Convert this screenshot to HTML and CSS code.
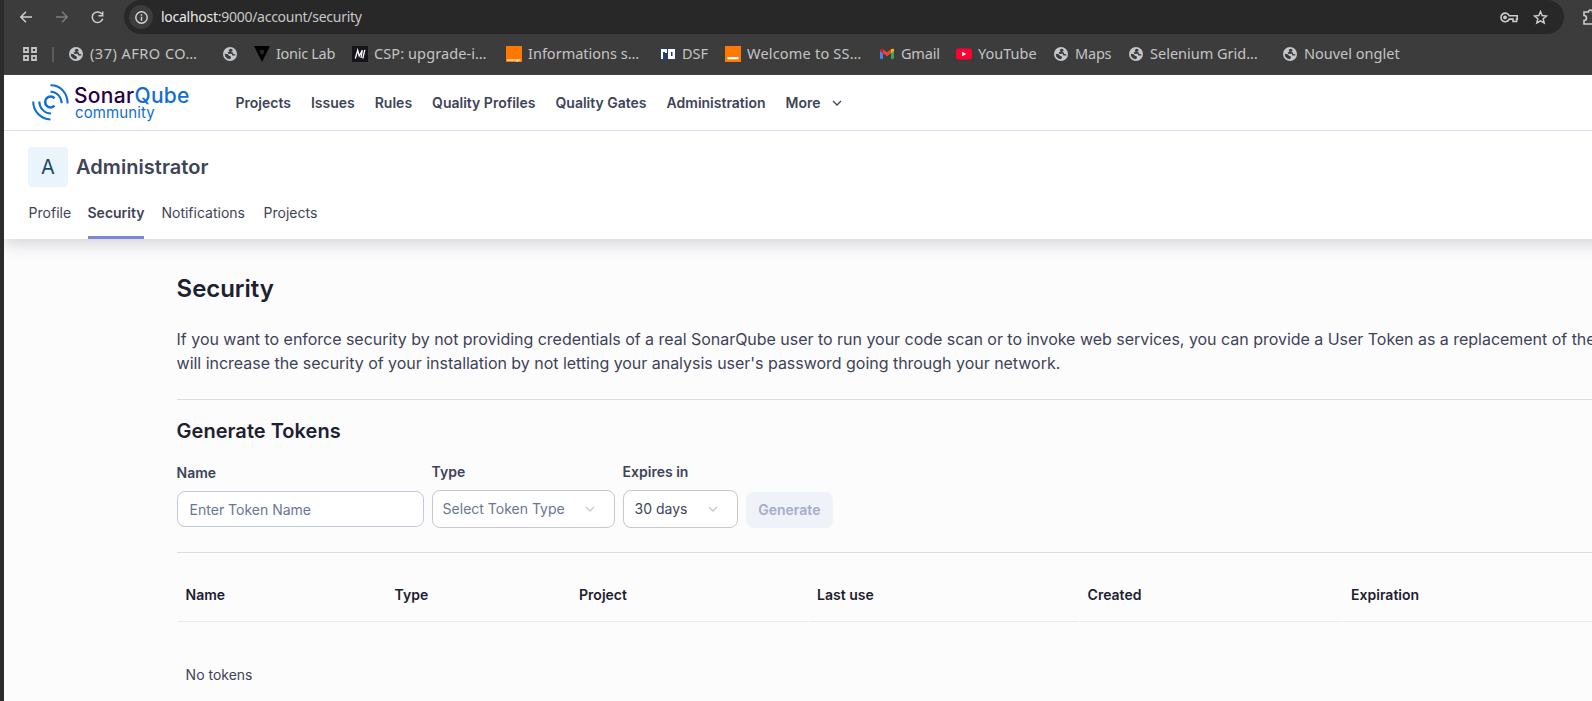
FILE: index.html
```html
<!DOCTYPE html>
<html lang="en">
<head>
<meta charset="utf-8">
<title>Security - SonarQube</title>
<link rel="stylesheet" href="styles.css">
</head>
<body>
<svg class="defs" width="0" height="0">
  <symbol id="globe" viewBox="0 0 14 14">
    <circle cx="7" cy="7" r="7" fill="#c4c7c9"/>
    <path d="M7.200 1.800L5.600 3.200 6.600 4.400 4.700 5.600 5.400 6.900 8.600 6.700 9.400 8.600 12.300 8.500 12.300 7.300 10.300 7 9.600 5.300 7.800 5.100 9.600 3.900 9.200 2.200zM1.700 6.700L4.800 7.300 6 8.800 7.800 9.400 8 10.700 6.900 12.300 4.200 11.500 2.200 9.500z" fill="#3c3c3c"/>
  </symbol>
  <symbol id="chevron" viewBox="0 0 10 6"><path d="M1 1l4 4 4-4" fill="none" stroke="currentColor" stroke-width="1.3"/></symbol>
</svg>
<div class="window">
  <div class="toolbar">
    <svg class="tool back" viewBox="0 0 12 12"><path d="M12 6H1M6 .8L.8 6 6 11.2" fill="none" stroke="#d0d0d0" stroke-width="1.5"/></svg>
    <svg class="tool forward" viewBox="0 0 12 12"><path d="M0 6h11M6 .8L11.2 6 6 11.2" fill="none" stroke="#7c7c7c" stroke-width="1.5"/></svg>
    <svg class="tool reload" viewBox="0 0 13 13"><path d="M11 3.2A5.3 5.3 0 1 0 11.7 7.7" fill="none" stroke="#d0d0d0" stroke-width="1.5"/><path d="M12.4.4v5H7.5V4h3.4V.4z" fill="#d0d0d0"/></svg>
    <div class="omnibox">
      <span class="info"><svg width="13" height="13" viewBox="0 0 13 13"><circle cx="6.5" cy="6.5" r="5.7" fill="none" stroke="#d6d6d6" stroke-width="1.4"/><path d="M6.5 5.8v4M6.5 3.2v1.5" stroke="#d6d6d6" stroke-width="1.4"/></svg></span>
      <span class="url"><b>localhost</b>:9000/account/security</span>
      <svg class="key" width="18" height="11" viewBox="0 0 18 11"><path d="M9.2 3.7A4.300 4.300 0 1 0 9.2 7.1H13v2.4h3.600V7.100h.700V3.700z" fill="none" stroke="#cbcbcb" stroke-width="1.600"/><circle cx="5" cy="5.400" r="1.900" fill="#cbcbcb"/></svg>
      <svg class="star" width="15" height="15" viewBox="0 0 15 15"><path d="M7.500 1.600l1.700 4 4.300.4-3.300 2.800 1 4.200-3.700-2.200L3.800 13l1-4.200L1.500 6l4.300-.4z" fill="none" stroke="#cbcbcb" stroke-width="1.500"/></svg>
    </div>
    <svg class="puzzle" width="16" height="17" viewBox="0 0 16 17"><path d="M1 3h4.500a2 2 0 0 1 4 0H14v12H1v-3.500a2.400 2.400 0 0 0 0-5z" fill="none" stroke="#cbcbcb" stroke-width="1.600"/></svg>
  </div>
  <div class="bookmarks">
    <svg class="apps" width="14" height="14" viewBox="0 0 14 14"><path d="M1 1h4v4H1zM9 1h4v4H9zM1 9h4v4H1zM9 9h4v4H9z" fill="none" stroke="#c4c4c4" stroke-width="1.800"/></svg>
    <span class="sep"></span>
    <span class="bm w1"><svg class="g"><use href="#globe"/></svg><span>(37) AFRO CO…</span></span>
    <span class="bm w2"><svg class="g"><use href="#globe"/></svg></span>
    <span class="bm w3"><svg class="i" viewBox="0 0 16 16"><path d="M0 0h16L8 16z" fill="#000"/><path d="M6 4h4v3L8 9 6 7z" fill="#252525"/></svg><span>Ionic Lab</span></span>
    <span class="bm w4"><svg class="i" viewBox="0 0 16 16"><path d="M0 0h16v16H0z" fill="#15141a"/><path d="M3.300 12.500L5.700 4.200 7.200 10 10.300 4.200 9 12M12.800 3.800L10.800 12.500" fill="none" stroke="#fff" stroke-width="1.300"/></svg><span>CSP: upgrade-i…</span></span>
    <span class="bm w5"><span class="i orange"><small>orange</small></span><span>Informations s…</span></span>
    <span class="bm w6"><svg class="i" viewBox="0 0 16 16"><path d="M0 2h16v12H0z" fill="#263c6c"/><path d="M1 3h6v4H5V6H3v7H1zM8 3h7v10H8zM11 6v4h1.500V6z" fill="#fff" fill-rule="evenodd"/></svg><span>DSF</span></span>
    <span class="bm w7"><svg class="i" viewBox="0 0 16 16"><path d="M0 0h16v16H0z" fill="#ff7900"/><path d="M2.500 11h11v2.300h-11z" fill="#fff"/></svg><span>Welcome to SS…</span></span>
    <span class="bm w8"><svg class="g" viewBox="0 0 14 14"><path d="M0 3.500l3 2V12H1a1 1 0 0 1-1-1z" fill="#4285f4"/><path d="M14 3.500l-3 2V12h2a1 1 0 0 0 1-1z" fill="#34a853"/><path d="M3 2.300l4 3 4-3v3.900L7 9.300 3 6.200z" fill="#ea4335"/><path d="M0 3c0-1.500 1.500-1.700 3-.7v3.900L0 4z" fill="#c5221f"/><path d="M14 3c0-1.500-1.500-1.700-3-.7v3.900L14 4z" fill="#fbbc04"/></svg><span>Gmail</span></span>
    <span class="bm w9"><svg class="i" viewBox="0 0 16 16"><rect y="2.500" width="16" height="11" rx="2.500" fill="#ff0033"/><path d="M6.200 5.700v4.600l4.200-2.300z" fill="#fff"/></svg><span>YouTube</span></span>
    <span class="bm w10"><svg class="g"><use href="#globe"/></svg><span>Maps</span></span>
    <span class="bm w11"><svg class="g"><use href="#globe"/></svg><span>Selenium Grid…</span></span>
    <span class="bm w12"><svg class="g"><use href="#globe"/></svg><span>Nouvel onglet</span></span>
  </div>
  <header class="nav">
    <div class="logo">
      <svg width="37" height="37" viewBox="0 0 37 37" fill="none" stroke="#126ed3" stroke-width="2.100"><path d="M22.500 14.300A5.400 5.400 0 1 0 22.500 21.700" stroke-width="2.500"/><path d="M18.500 7.700C24.500 7.500 29.300 12.500 29.700 19.300M18.500 1.200C28.500 1 35.500 9 35.600 19.500"/><path d="M7.300 17.500A12 12 0 0 0 19 29.500M1.200 17.500A18 18 0 0 0 18.500 35.500"/></svg>
      <div class="wordmark"><div class="name">Sonar<span>Qube</span></div><div class="edition">community</div></div>
    </div>
    <nav class="menu"><a>Projects</a><a>Issues</a><a>Rules</a><a>Quality Profiles</a><a>Quality Gates</a><a>Administration</a><a>More<svg class="chev"><use href="#chevron"/></svg></a></nav>
  </header>
  <section class="account">
    <div class="who"><span class="avatar">A</span><span>Administrator</span></div>
    <div class="tabs"><a>Profile</a><a class="active">Security</a><a>Notifications</a><a>Projects</a></div>
  </section>
  <main>
    <h1>Security</h1>
    <p class="intro">If you want to enforce security by not providing credentials of a real SonarQube user to run your code scan or to invoke web services, you can provide a User Token as a replacement of the user login. This<br>will increase the security of your installation by not letting your analysis user's password going through your network.</p>
    <h2>Generate Tokens</h2>
    <form class="form">
      <label class="f-name">Name<span class="field">Enter Token Name</span></label>
      <label class="f-type">Type<span class="field">Select Token Type<svg class="chev"><use href="#chevron"/></svg></span></label>
      <label class="f-exp">Expires in<span class="field">30 days<svg class="chev"><use href="#chevron"/></svg></span></label>
      <button type="button">Generate</button>
    </form>
    <div class="table">
      <div class="th">Name</div><div class="th">Type</div><div class="th">Project</div><div class="th">Last use</div><div class="th">Created</div><div class="th">Expiration</div>
      <div class="empty">No tokens</div>
    </div>
  </main>
</div>
</body>
</html>
```
FILE: styles.css
```css
* { box-sizing: border-box; }
body { margin: 0; width: 1592px; height: 701px; overflow: hidden; background: #2c2c2d; font-family: Inter, sans-serif; font-size: 14px; line-height: 20px; color: #3e4357; }
svg { display: block; flex: none; }
.defs { position: absolute; }
.window { margin-left: 4px; width: 1880px; height: 701px; overflow: hidden; background: #fcfcfd; display: flex; flex-direction: column; }
.toolbar { height: 34px; flex: none; background: #3c3c3c; display: flex; align-items: center; padding-left: 16px; overflow: hidden; }
.tool { width: 12px; height: 12px; }
.forward { margin-left: 24px; }
.reload { width: 13px; height: 13px; margin-left: 23px; }
.omnibox { margin-left: 20px; width: 1440px; height: 34px; flex: none; background: #282828; border-radius: 17px; display: flex; align-items: center; font-family: "Noto Sans", sans-serif; color: #c7c7c7; }
.info { width: 24px; height: 24px; margin-left: 5px; border-radius: 50%; background: #3c3c3c; display: grid; place-items: center; }
.url { margin-left: 8px; font-size: 14px; letter-spacing: -.27px; white-space: nowrap; }
.url b { font-weight: 400; color: #e8e8e8; }
.key { margin-left: auto; }
.star { margin: 0 16px 0 15px; }
.puzzle { margin-left: 19px; }
.bookmarks { height: 41px; flex: none; background: #3c3c3c; border-bottom: 1px solid #464646; display: flex; align-items: center; padding-left: 19px; font: 14.5px/20px "Noto Sans", sans-serif; color: #c4c4c4; white-space: nowrap; }
.sep { width: 2px; height: 15px; background: #5c5c5c; margin: 0 15px 0 15px; }
.bm { display: flex; align-items: center; gap: 6px; flex: none; }
.bm > span:last-child:not(.i) { padding-bottom: 2px; }
.g { width: 14px; height: 14px; margin-right: 1px; }
.i { width: 16px; height: 16px; flex: none; }
.orange { background: #ff7900; color: #fff; overflow: hidden; display: flex; align-items: flex-end; justify-content: center; }
.orange small { font: bold 4px/5px "Liberation Sans", sans-serif; }
.w1 { width: 154px; letter-spacing: .5px; }
.w2 { width: 31px; }
.w3 { width: 98px; letter-spacing: -.3px; }
.w4 { width: 154px; letter-spacing: .1px; }
.w5 { width: 154px; }
.w6 { width: 65px; }
.w7 { width: 155px; letter-spacing: .2px; }
.w8 { width: 76px; letter-spacing: -.2px; }
.w9 { width: 98px; }
.w10 { width: 75px; letter-spacing: -.2px; }
.w11 { width: 154px; }
.nav { height: 56px; flex: none; background: #fff; border-bottom: 1px solid #dde0ee; display: flex; align-items: center; padding-left: 28px; position: relative; z-index: 1; }
.logo { width: 203.5px; display: flex; gap: 5px; }
.wordmark { color: #126ed3; }
.name { font: 500 21px/22px Inter, sans-serif; letter-spacing: .3px; color: #290042; padding-top: 1px; }
.name span { color: #126ed3; }
.edition { font-size: 15px; line-height: 15px; letter-spacing: .1px; padding-left: 1px; margin-top: -2px; }
.menu { display: flex; gap: 20px; font-weight: 600; }
.menu a { display: flex; align-items: center; }
.menu .chev { margin-left: 11px; }
.chev { width: 10px; height: 6px; }
.account { height: 108px; flex: none; background: #fff; padding: 16px 24px 0; box-shadow: 0 4px 16px rgba(29,33,47,.2); position: relative; }
.who { display: flex; align-items: center; gap: 8px; font-size: 20px; letter-spacing: .06px; font-weight: 600; }
.avatar { width: 40px; height: 40px; border-radius: 4px; background: #e9f4fb; color: #1b4a66; font-weight: 400; font-size: 20px; display: grid; place-items: center; }
.tabs { display: flex; gap: 17px; height: 52px; }
.tabs a { padding-top: 16px; }
.tabs a:first-child { padding-left: .6px; margin-right: -.6px; }
.tabs a:nth-child(n+4) { padding-left: 1.600px; }
.tabs .active { font-weight: 600; border-bottom: 3px solid #7b87d9; }
main { padding: 34px 0 0 172.600px; }
h1, h2 { margin: 0; color: #1d212f; font-weight: 600; }
h1 { font-size: 24px; line-height: 32px; letter-spacing: -.05px; }
h2 { font-size: 20px; line-height: 28px; margin-top: 17px; letter-spacing: .03px; }
.intro { margin: 22px 0 0; padding-bottom: 24px; font-size: 16px; line-height: 24px; letter-spacing: -.026px; white-space: nowrap; border-bottom: 1px solid #dcdcdf; }
.form { display: flex; align-items: flex-end; gap: 8px; height: 108px; padding-bottom: 24px; border-bottom: 1px solid #dcdcdf; }
.form label { font-weight: 600; display: flex; flex-direction: column; gap: 8px; }
.field { display: flex; align-items: center; height: 38px; border: 1px solid #c8c8cb; border-radius: 8px; background: #fff; font-weight: 400; padding: 0 19px 0 10px; }
.field .chev { margin-left: auto; color: #c8c8c8; }
.f-name { width: 247px; padding-bottom: 1px; }
.f-name .field { height: 36px; border-color: #c0c8df; padding: 1px 0 0 12px; color: #697597; }
.f-type { width: 183px; }
.f-type .field { color: #697597; }
.f-exp { width: 115px; }
.f-exp .field { padding-left: 11px; }
.form button { width: 87px; height: 36px; border: 0; border-radius: 8px; background: #eff2f9; color: #a6adc8; font: 600 14px Inter, sans-serif; padding: 0 0 1px .5px; }
.table { display: grid; grid-template-columns: 208px 183.500px 237px 269.500px 262.500px 540px; column-gap: 1px; margin-left: 1px; }
.th { height: 69px; padding: 32px 0 0 8px; border-bottom: 1px solid #ebebed; font-weight: 600; color: #1d212f; }
.empty { grid-column: 1 / -1; padding: 43px 0 0 8px; }
```
